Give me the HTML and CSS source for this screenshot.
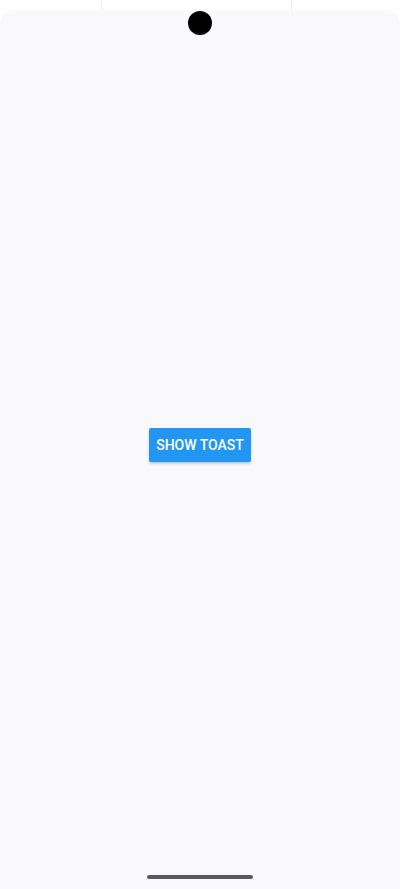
FILE: index.html
```html
<!DOCTYPE html>
<html>
<head>
<meta charset="utf-8">
<link rel="stylesheet" href="styles.css">
</head>
<body>
<div class="bezel">
  <span class="seam seam-left"></span>
  <span class="seam seam-right"></span>
</div>
<div class="screen">
  <div class="camera"></div>
  <main class="content">
    <button class="toast-btn">SHOW TOAST</button>
  </main>
  <div class="nav">
    <span class="home-bar"></span>
  </div>
</div>
</body>
</html>
```

FILE: styles.css
```css
html, body {
  margin: 0;
  padding: 0;
  background: #ffffff;
  width: 400px;
  height: 889px;
  overflow: hidden;
  font-family: Roboto, "Noto Sans", sans-serif;
}
.bezel {
  height: 10px;
  position: relative;
  background: #ffffff;
}
.seam {
  position: absolute;
  top: 0;
  width: 1px;
  height: 10px;
  background: #ececee;
}
.seam-left { left: 101px; }
.seam-right { left: 291px; }
.screen {
  position: relative;
  height: 879px;
  background: #f9f8fb;
  border-radius: 14px 14px 0 0;
  display: flex;
  flex-direction: column;
}
.camera {
  position: absolute;
  left: 188px;
  top: 1px;
  width: 24px;
  height: 24px;
  border-radius: 50%;
  background: #000;
}
.content {
  flex: 1;
  display: flex;
  align-items: center;
  justify-content: center;
  padding-top: 20px;
}
.toast-btn {
  background: #2196f3;
  color: #fff;
  border: none;
  border-radius: 2px;
  width: 102px;
  height: 34px;
  padding: 0;
  font-family: Roboto, sans-serif;
  font-size: 14px;
  font-weight: 500;
  letter-spacing: 0;
  box-shadow: 0 2px 3px rgba(0,0,0,0.16), 0 1px 1px rgba(0,0,0,0.08);
}
.nav {
  height: 29px;
  display: flex;
  justify-content: center;
  align-items: flex-start;
}
.home-bar {
  margin-top: 15px;
  width: 106px;
  height: 4px;
  border-radius: 2px;
  background: #5a5a5c;
}
```
